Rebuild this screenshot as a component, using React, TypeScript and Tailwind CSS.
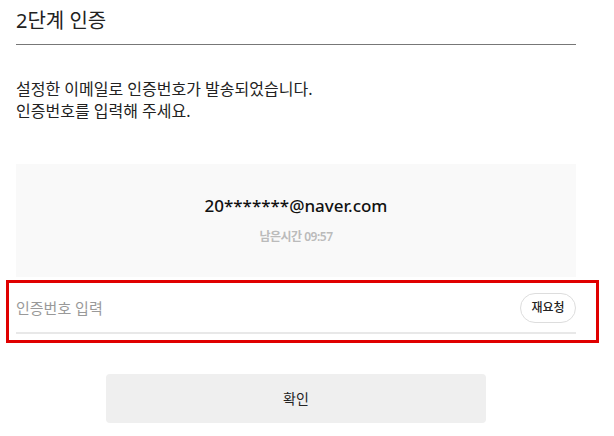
import { useState } from 'react'

export default function App() {
  const [code, setCode] = useState('')

  return (
    <div className="w-[614px] h-[436px] bg-white pl-4 overflow-hidden font-['Noto_Sans','Noto_Sans_CJK_KR',sans-serif] text-[#222]">
      <div className="w-[560px]">
        {/* Title */}
        <div className="h-[45px] pt-[7px] border-b border-[#777]">
          <h2 className="text-[20px] leading-[28px] font-normal">2단계 인증</h2>
        </div>

        {/* Guide */}
        <p className="mt-[33px] text-[16px] leading-[22px]">
          설정한 이메일로 인증번호가 발송되었습니다.
          <br />
          인증번호를 입력해 주세요.
        </p>

        {/* Sent to */}
        <div className="mt-[42px] h-[113px] bg-[#f9f9f9] flex flex-col items-center pt-[29px]">
          <span className="text-[17px] leading-[26px] font-medium text-[#111]">20*******@naver.com</span>
          <span className="mt-[10px] text-[12px] leading-[16px] font-semibold text-[#bbb] tracking-[-0.5px]">남은시간 09:57</span>
        </div>

        {/* Code input */}
        <div className="mt-[3px] -ml-[10px] w-[593px] border-[3px] border-[#e00000] pl-[7px] pr-[20px] pb-[6px]">
          <div className="flex items-center justify-between pt-[10px] pb-[9px] border-b-2 border-[#e8e8e8]">
            <input
              value={code}
              onChange={(e) => setCode(e.target.value)}
              placeholder="인증번호 입력"
              className="flex-1 bg-transparent outline-none text-[15px] leading-[22px] placeholder:text-[#999]"
            />
            <button className="h-[30px] w-[56px] rounded-full border border-[#ddd] bg-white text-[12px] font-medium text-[#222]">
              재요청
            </button>
          </div>
        </div>

        {/* Submit */}
        <button className="block mx-auto mt-[31px] h-[49px] w-[380px] rounded-[4px] bg-[#efefef] text-[14px] text-[#222]">
          확인
        </button>
      </div>
    </div>
  )
}
